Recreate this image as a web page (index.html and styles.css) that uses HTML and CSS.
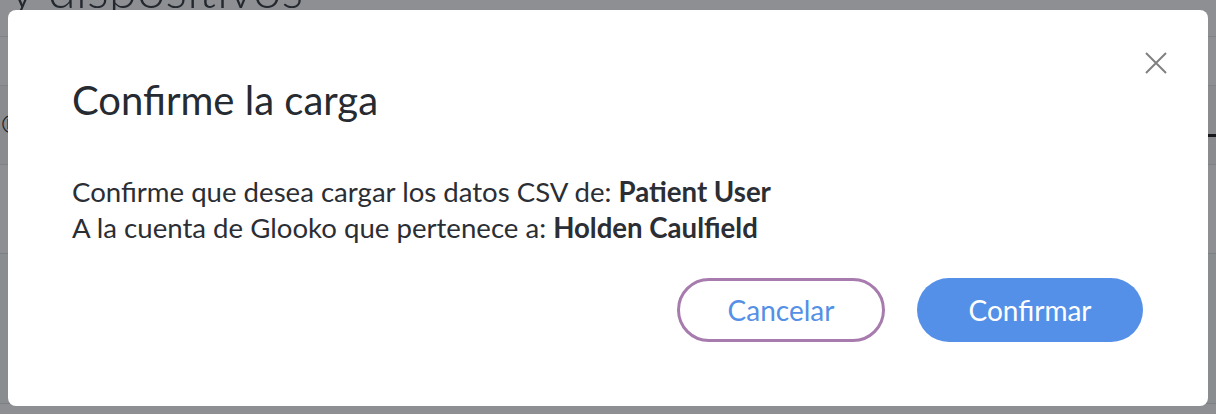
FILE: index.html
```html
<!DOCTYPE html>
<html lang="es">
<head>
<meta charset="utf-8">
<title>Confirme la carga</title>
<link rel="stylesheet" href="styles.css">
</head>
<body>
<div class="page">
  <header class="page-head">
    <h1 class="page-title">Aplicaciones y dispositivos</h1>
  </header>
  <div class="band band-light"></div>
  <div class="band band-dark"><span class="reg">®</span><span class="dash"></span></div>
  <div class="band band-light2"></div>
  <div class="band band-rest"></div>
</div>

<div class="overlay">
  <div class="modal" role="dialog" aria-labelledby="modal-title">
    <button class="close" aria-label="Cerrar">
      <svg width="22" height="22" viewBox="0 0 22 22" aria-hidden="true">
        <path d="M1 1 L21 21 M21 1 L1 21" stroke="#808080" stroke-width="2" fill="none"/>
      </svg>
    </button>
    <h2 id="modal-title" class="modal-title">Confirme la carga</h2>
    <div class="modal-body">
      <p>Confirme que desea cargar los datos CSV de: <strong>Patient User</strong></p>
      <p>A la cuenta de Glooko que pertenece a: <strong>Holden Caulfield</strong></p>
    </div>
    <div class="modal-actions">
      <button class="btn btn-secondary">Cancelar</button>
      <button class="btn btn-primary">Confirmar</button>
    </div>
  </div>
</div>
</body>
</html>
```

FILE: styles.css
```css
* { box-sizing: border-box; }

html, body {
  margin: 0;
  padding: 0;
  height: 100%;
  overflow: hidden;
}

body {
  font-family: Lato, "Open Sans", Arial, sans-serif;
  background: #ffffff;
  color: #2a2d33;
}

.page {
  display: flex;
  flex-direction: column;
}

.page-head {
  height: 37px;
  border-bottom: 1px solid #e2e4e7;
  overflow: hidden;
}

.page-title {
  margin: -40px 0 0 -276px;
  font-size: 51px;
  font-weight: 300;
  line-height: 58px;
  color: #2c3038;
  white-space: nowrap;
}

.band { border-bottom: 1px solid #e2e4e7; }
.band-light { height: 49px; background: #ffffff; }
.band-dark {
  height: 79px;
  background: #f6f7f8;
  display: flex;
  align-items: center;
  justify-content: space-between;
}
.reg {
  margin-left: -1px;
  font-family: "DejaVu Sans", sans-serif;
  font-size: 24px;
  line-height: 26px;
  color: #20242a;
}
.dash {
  align-self: flex-start;
  margin-top: 48px;
  width: 10px;
  height: 3px;
  background: #111;
}
.band-light2 { height: 89px; background: #ffffff; border-bottom-color: #dcdee1; }
.band-rest { height: 150px; background: #f9fafb; border-bottom-color: #dcdee1; }

.overlay {
  position: fixed;
  inset: 0;
  background: rgba(28, 32, 38, 0.5);
  padding: 10px 8px 8px 8px;
}

.modal {
  position: relative;
  width: 1200px;
  height: 396px;
  background: #ffffff;
  border-radius: 8px;
  padding: 66px 64px 64px 64px;
  display: flex;
  flex-direction: column;
}

.close {
  position: absolute;
  top: 42px;
  right: 41px;
  width: 22px;
  height: 22px;
  padding: 0;
  border: 0;
  background: none;
  display: flex;
}

.modal-title {
  margin: 0;
  font-size: 40px;
  font-weight: 400;
  line-height: 48px;
  color: #262a31;
}

.modal-body {
  margin-top: 50px;
  font-size: 27.6px;
  line-height: 36px;
  color: #2b2e34;
}

.modal-body p { margin: 0; }
.modal-body strong { font-weight: 700; }

.modal-actions {
  margin-top: auto;
  display: flex;
  justify-content: flex-end;
  gap: 32px;
  padding-right: 1px;
}

.btn {
  height: 64px;
  border-radius: 32px;
  font-family: Lato, "Open Sans", Arial, sans-serif;
  font-size: 28px;
  font-weight: 400;
  cursor: pointer;
}

.btn-secondary {
  width: 208px;
  background: #ffffff;
  color: #5590e6;
  border: 3px solid #a77bad;
}

.btn-primary {
  width: 226px;
  background: #5590e8;
  color: #ffffff;
  border: 0;
}
```
